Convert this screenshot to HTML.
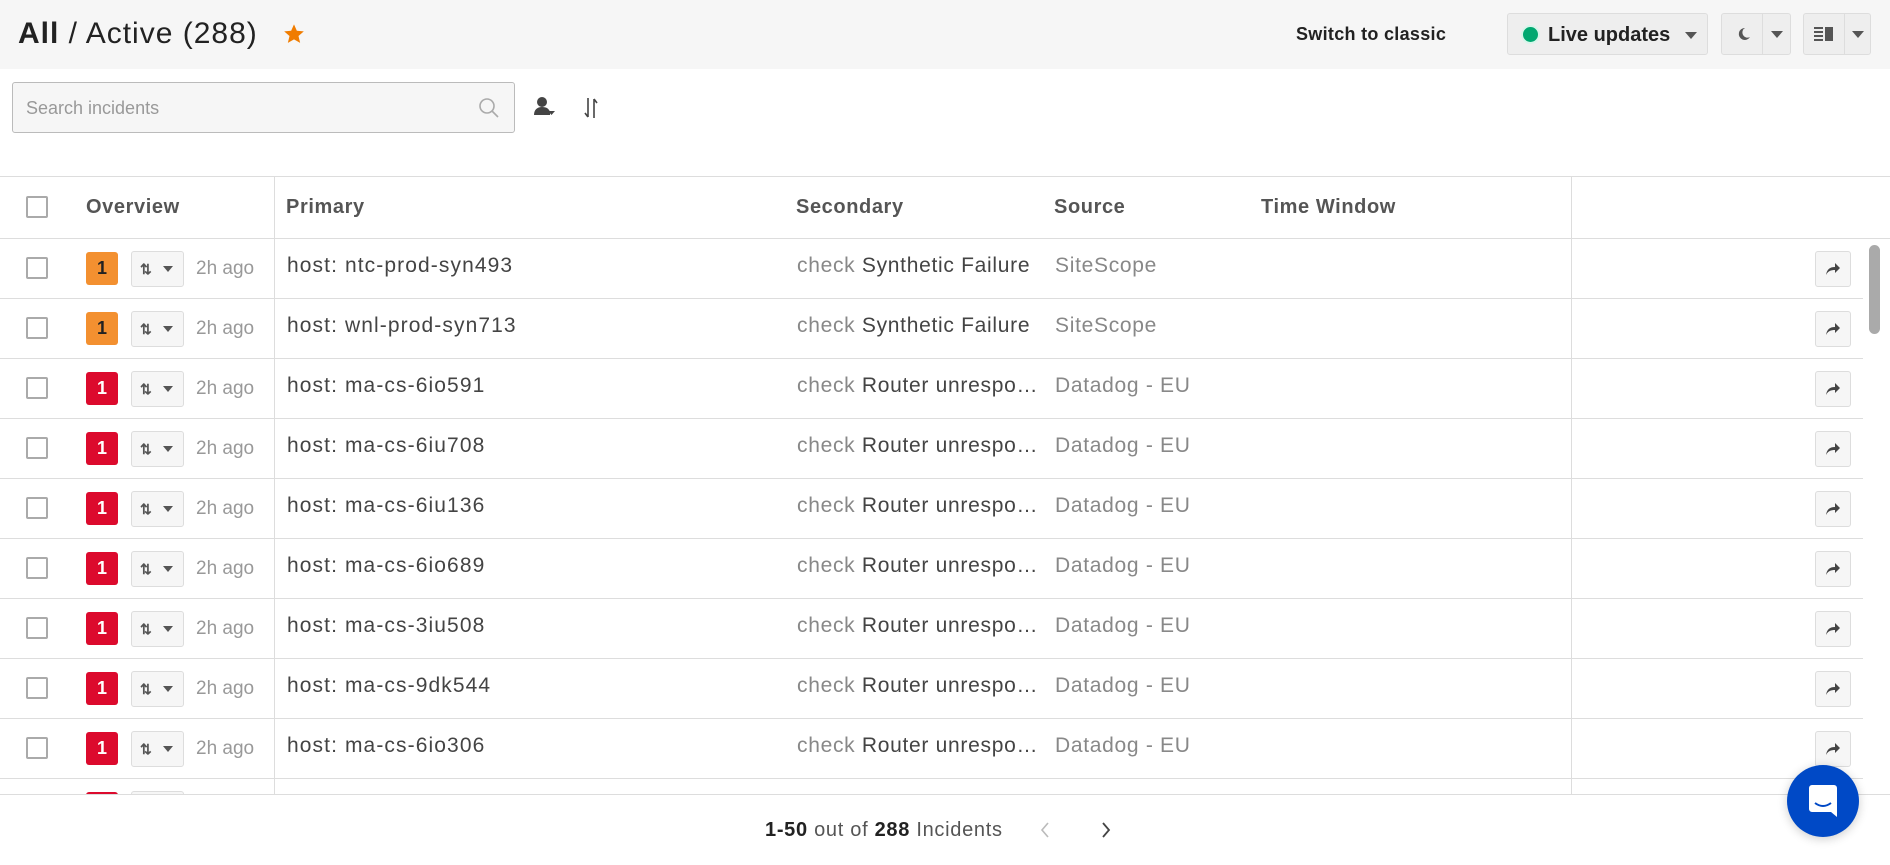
<!DOCTYPE html>
<html><head><meta charset="utf-8"><style>
*{box-sizing:border-box;margin:0;padding:0}
body{width:1890px;height:865px;overflow:hidden;background:#fff;font-family:"Liberation Sans",sans-serif;color:#333;position:relative}
.hdr{position:absolute;left:0;top:0;width:1890px;height:69px;background:#f6f6f6}
.title{position:absolute;left:18px;top:17px;font-size:30px;color:#222;letter-spacing:1px}
.title b{font-weight:700}
.abs{position:absolute}
.btn{position:absolute;border:1px solid #ddd;background:#eeeeee;border-radius:3px}
.tri{width:0;height:0;border-left:6px solid transparent;border-right:6px solid transparent;border-top:7px solid #555;position:absolute}
.search{position:absolute;left:12px;top:82px;width:503px;height:51px;border:1px solid #bbb;border-radius:3px;background:#f6f6f6}
.search span{position:absolute;left:13px;top:15px;font-size:18px;color:#999}
.hline{position:absolute;left:0;height:1px;background:#ddd}
.vline{position:absolute;width:1px;background:#ddd}
.th{position:absolute;top:196px;font-size:20px;color:#555;font-weight:600;letter-spacing:0.6px}
.cb{position:absolute;left:26px;width:22px;height:22px;border:2px solid #aaa;border-radius:2px;background:#fff}
.row{position:absolute;left:0;width:1863px;height:60px}
.badge{position:absolute;left:86px;top:13px;width:32px;height:33px;border-radius:3px;color:#222;font-size:18px;font-weight:700;text-align:center;line-height:33px}
.ob{position:absolute;left:131px;top:12px;width:53px;height:36px;border:1px solid #ddd;background:#f6f6f6;border-radius:3px;font-size:14px;color:#555}
.ago{position:absolute;left:196px;top:19px;font-size:19px;color:#999}
.cell{position:absolute;top:15px;font-size:21px;color:#444;letter-spacing:1.1px;white-space:nowrap}
.sec{letter-spacing:0.7px}
.gray{color:#888}
.sh{position:absolute;left:1815px;top:12px;width:36px;height:36px;border:1px solid #ddd;background:#f6f6f6;border-radius:3px}
</style></head><body>
<div class="hdr"></div>
<div class="title"><b>All</b> / Active (288)</div>
<svg class="abs" style="left:283px;top:23px" width="22" height="22" viewBox="0 0 24 24"><path fill="#f07c00" d="M12 1.5l3.1 7 7.6.7-5.8 5 1.8 7.5L12 17.8l-6.7 3.9 1.8-7.5-5.8-5 7.6-.7z"/></svg>
<div class="abs" style="left:1296px;top:24px;font-size:18px;font-weight:700;color:#222;letter-spacing:0.3px">Switch to classic</div>
<div class="btn" style="left:1507px;top:13px;width:201px;height:42px">
 <div class="abs" style="left:15px;top:13px;width:15px;height:15px;border-radius:50%;background:#00a870;box-shadow:0 0 0 2px #d7f5ea"></div>
 <div class="abs" style="left:40px;top:10px;font-size:20px;font-weight:700;color:#222">Live updates</div>
 <div class="tri" style="left:177px;top:18px"></div>
</div>
<div class="btn" style="left:1721px;top:13px;width:70px;height:42px">
 <svg class="abs" style="left:14px;top:12px" width="16" height="16" viewBox="0 0 16 16"><path fill="#555" d="M9 2a6 6 0 1 0 5 9 5 5 0 0 1-5-9z"/></svg>
 <div class="vline" style="left:40px;top:0;height:40px"></div>
 <div class="tri" style="left:49px;top:17px"></div>
</div>
<div class="btn" style="left:1803px;top:13px;width:68px;height:42px">
 <svg class="abs" style="left:10px;top:12px" width="20" height="18" viewBox="0 0 20 18"><g fill="#555"><rect x="0" y="1" width="9" height="2"/><rect x="0" y="5" width="9" height="2"/><rect x="0" y="9" width="9" height="2"/><rect x="0" y="13" width="9" height="2"/><rect x="11" y="1" width="8" height="14"/></g></svg>
 <div class="vline" style="left:40px;top:0;height:40px"></div>
 <div class="tri" style="left:48px;top:17px"></div>
</div>
<div class="search"><span>Search incidents</span>
 <svg class="abs" style="left:465px;top:14px" width="22" height="22" viewBox="0 0 22 22"><circle cx="9" cy="9" r="7" fill="none" stroke="#aaa" stroke-width="1.6"/><path d="M14 14l6 6" stroke="#aaa" stroke-width="1.6"/></svg>
</div>
<svg class="abs" style="left:534px;top:96px" width="22" height="22" viewBox="0 0 22 22"><circle cx="8" cy="6" r="5" fill="#444"/><path d="M0 19c0-5 3-8 8-8s7 2 8 5v3z" fill="#444"/><path d="M14 15h7l-3.5 4z" fill="#444"/></svg>
<svg class="abs" style="left:583px;top:96px" width="16" height="24" viewBox="0 0 16 24"><path d="M5 2v19M2 17l3 4M11 22V3M11 3l3 4" stroke="#444" stroke-width="1.6" fill="none"/></svg>

<div class="hline" style="top:176px;width:1890px"></div>
<div class="hline" style="top:238px;width:1890px"></div>
<div class="vline" style="left:274px;top:176px;height:618px"></div>
<div class="vline" style="left:1571px;top:176px;height:618px"></div>
<div class="cb" style="top:196px"></div>
<div class="th" style="left:86px">Overview</div>
<div class="th" style="left:286px">Primary</div>
<div class="th" style="left:796px">Secondary</div>
<div class="th" style="left:1054px">Source</div>
<div class="th" style="left:1261px">Time Window</div>

<div id="rows"></div>
<script>
var d=[["#f39030","ntc-prod-syn493","Synthetic Failure","SiteScope"],["#f39030","wnl-prod-syn713","Synthetic Failure","SiteScope"],
["#dc0a2d","ma-cs-6io591"],["#dc0a2d","ma-cs-6iu708"],["#dc0a2d","ma-cs-6iu136"],["#dc0a2d","ma-cs-6io689"],["#dc0a2d","ma-cs-3iu508"],["#dc0a2d","ma-cs-9dk544"],["#dc0a2d","ma-cs-6io306"],["#dc0a2d",""]];
var h="";
d.forEach(function(r,i){var top=239+i*60;
var red=r[0]=="#dc0a2d";
h+='<div class="row" style="top:'+top+'px"><div class="cb" style="top:18px"></div>'+
'<div class="badge" style="background:'+r[0]+';color:'+(red?'#fff':'#222')+'">1</div>'+
'<div class="ob"><span style="position:absolute;left:8px;top:9px;font-weight:700">⇅</span><div class="tri" style="left:31px;top:14px;border-left-width:5px;border-right-width:5px;border-top-width:6px"></div></div>'+
'<div class="ago">2h ago</div>'+
(r[1]?'<div class="cell" style="left:287px">host: '+r[1]+'</div>'+
'<div class="cell sec" style="left:797px"><span class="gray">check</span> '+(r[2]||'Router unrespo…')+'</div>'+
'<div class="cell gray sec" style="left:1055px">'+(r[3]||'Datadog - EU')+'</div>'+
'<div class="sh"><svg style="position:absolute;left:9px;top:10px" width="16" height="14" viewBox="0 0 16 14"><path d="M1 13C2 7 5 5 10 5V1l5 5-5 5V8C6 8 3 9 1 13z" fill="#444"/></svg></div>':'')+
'</div><div class="hline" style="top:'+(top+59)+'px;width:1863px"></div>';});
document.getElementById('rows').innerHTML=h;
</script>
<div class="abs" style="left:1869px;top:245px;width:11px;height:89px;border-radius:6px;background:#aaa"></div>
<div class="abs" style="left:0;top:794px;width:1890px;height:71px;background:#fff;border-top:1px solid #ddd"></div>
<div class="abs" style="left:765px;top:819px;font-size:20px;color:#555;letter-spacing:0.7px"><b style="color:#222">1-50</b> out of <b style="color:#222">288</b> Incidents</div>
<svg class="abs" style="left:1039px;top:820px" width="12" height="20" viewBox="0 0 12 20"><path d="M9 3L3 10l6 7" stroke="#bbb" stroke-width="1.6" fill="none"/></svg>
<svg class="abs" style="left:1100px;top:820px" width="12" height="20" viewBox="0 0 12 20"><path d="M3 3l6 7-6 7" stroke="#444" stroke-width="1.8" fill="none"/></svg>
<div class="abs" style="left:1787px;top:765px;width:72px;height:72px;border-radius:50%;background:#0049c6;box-shadow:0 2px 10px rgba(0,0,0,.2)">
 <svg class="abs" style="left:22px;top:20px" width="28" height="32" viewBox="0 0 28 32"><path d="M3 0h22a3 3 0 0 1 3 3v29l-6-5H3a3 3 0 0 1-3-3V3a3 3 0 0 1 3-3z" fill="#fff"/><path d="M6 18q8 6 16 0" stroke="#0049c6" stroke-width="2" fill="none"/></svg>
</div>
</body></html>
